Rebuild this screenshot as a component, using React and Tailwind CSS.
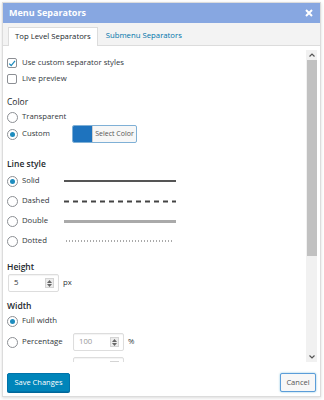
import { useState } from "react"

function Checkbox({ checked }) {
  return (
    <span className="flex h-[10px] w-[10px] shrink-0 items-center justify-center rounded-[2px] border border-[#8c8f94] bg-white">
      {checked && (
        <svg width="9" height="9" viewBox="0 0 10 10">
          <path d="M1.5 5.2 L4 7.6 L8.8 1.8" fill="none" stroke="#1e8cbe" strokeWidth="1.6" />
        </svg>
      )}
    </span>
  )
}

function Radio({ checked }) {
  return (
    <span className="flex h-[11px] w-[11px] shrink-0 items-center justify-center rounded-full border border-[#8c8f94] bg-white">
      {checked && <span className="h-[5px] w-[5px] rounded-full bg-[#1e8cbe]"></span>}
    </span>
  )
}

function Spinner() {
  return (
    <span className="flex h-[10px] w-[9px] flex-col items-center justify-center gap-[1px] border border-[#d4d4d4] bg-[#ececec]">
      <svg width="5" height="3" viewBox="0 0 5 3">
        <path d="M0 3 L2.5 0 L5 3 Z" fill="#666" />
      </svg>
      <svg width="5" height="3" viewBox="0 0 5 3">
        <path d="M0 0 L2.5 3 L5 0 Z" fill="#666" />
      </svg>
    </span>
  )
}

function NumberInput({ value, muted }) {
  return (
    <div className="flex h-[18px] w-[51px] items-center justify-between rounded-[2px] border border-[#ddd] bg-white pl-[5px] pr-[4px] shadow-[inset_0_1px_1px_rgba(0,0,0,0.05)]">
      <span className={muted ? "text-[#999]" : "text-[#32373c]"}>{value}</span>
      <Spinner />
    </div>
  )
}

function LineSample({ type }) {
  if (type === "solid") return <div className="h-[2px] w-[112px] bg-[#555]"></div>
  if (type === "double") return <div className="h-[3px] w-[112px] bg-[#aaa]"></div>
  if (type === "dashed")
    return (
      <svg width="112" height="3">
        <line x1="0" y1="1.5" x2="112" y2="1.5" stroke="#444" strokeWidth="2" strokeDasharray="5 4" />
      </svg>
    )
  return (
    <svg width="112" height="2">
      <line x1="2" y1="1" x2="110" y2="1" stroke="#555" strokeWidth="1" strokeDasharray="1 2" />
    </svg>
  )
}

export default function App() {
  const [tab] = useState("top")
  const lineStyles = [
    { id: "solid", label: "Solid", checked: true },
    { id: "dashed", label: "Dashed" },
    { id: "double", label: "Double" },
    { id: "dotted", label: "Dotted" },
  ]

  return (
    <div className="h-[400px] w-[324px] bg-white pl-[2px] pt-[2px] text-[7.75px] text-[#32373c] font-['Open_Sans',sans-serif]">
      <div className="flex h-[395px] w-[319px] flex-col border border-[#dcdcdc] bg-white shadow-[0_1px_3px_rgba(0,0,0,0.15)]">
        {/* Title bar */}
        <div className="flex h-[20px] shrink-0 items-center justify-between bg-[#87a7e1] pl-[6px] pr-[7px]">
          <span className="text-[9px] font-bold text-white">Menu Separators</span>
          <svg width="8" height="8" viewBox="0 0 8 8">
            <path d="M1 1 L7 7 M7 1 L1 7" stroke="white" strokeWidth="2" />
          </svg>
        </div>

        {/* Tabs */}
        <div className="flex h-[23px] shrink-0 items-end border-b border-[#dcdcdc] bg-[#f3f3f3] pl-[5px]">
          <div className="-mb-px flex h-[19px] items-center border border-b-0 border-[#dcdcdc] bg-white px-[6px] text-[#23282d]">
            {tab === "top" && "Top Level Separators"}
          </div>
          <div className="flex h-[18px] items-center px-[8px] text-[#0073aa]">Submenu Separators</div>
        </div>

        {/* Body */}
        <div className="flex h-[316px] shrink-0 pt-[4px]">
          <div className="flex-1 overflow-hidden pl-[4px] pt-[5px]">
            <div className="flex h-[16px] items-center gap-[5px]">
              <Checkbox checked />
              <span>Use custom separator styles</span>
            </div>
            <div className="flex h-[16px] items-center gap-[5px]">
              <Checkbox />
              <span>Live preview</span>
            </div>

            <div className="mt-[8px] flex h-[14px] items-center text-[8.5px] text-[#23282d]">Color</div>
            <div className="flex h-[16px] items-center gap-[4px]">
              <Radio />
              <span>Transparent</span>
            </div>
            <div className="flex h-[18px] items-center">
              <div className="flex w-[65px] items-center gap-[4px]">
                <Radio checked />
                <span>Custom</span>
              </div>
              <div className="flex h-[18px] w-[65px] overflow-hidden rounded-[2px] border border-[#7fb0d6] bg-[#f7f7f7]">
                <span className="w-[19px] shrink-0 bg-[#1e73be]"></span>
                <span className="flex flex-1 items-center justify-center whitespace-nowrap border-l border-[#ccc] text-[7px] text-[#555]">Select Color</span>
              </div>
            </div>

            <div className="mt-[14px] flex h-[14px] items-center text-[8.5px] font-semibold text-[#23282d]">Line style</div>
            {lineStyles.map((s) => (
              <div key={s.id} className="flex h-[20px] items-center">
                <div className="flex w-[57px] items-center gap-[4px]">
                  <Radio checked={s.checked} />
                  <span>{s.label}</span>
                </div>
                <LineSample type={s.id} />
              </div>
            ))}

            <div className="mt-[9px] flex h-[14px] items-center text-[8.5px] font-semibold text-[#23282d]">Height</div>
            <div className="flex items-center gap-[4px] pl-[1px]">
              <NumberInput value="5" />
              <span>px</span>
            </div>

            <div className="mt-[7px] flex h-[14px] items-center text-[8.5px] font-semibold text-[#23282d]">Width</div>
            <div className="flex h-[16px] items-center gap-[4px]">
              <Radio checked />
              <span>Full width</span>
            </div>
            <div className="mt-[4px] flex items-center">
              <div className="flex w-[66px] items-center gap-[4px]">
                <Radio />
                <span>Percentage</span>
              </div>
              <NumberInput value="100" muted />
              <span className="ml-[4px]">%</span>
            </div>
            <div className="mt-[6px] flex items-center pl-[66px]">
              <NumberInput value="" muted />
            </div>
          </div>

          {/* Scrollbar */}
          <div className="mr-[3px] flex w-[11px] flex-col items-center bg-[#f1f1f1]">
            <div className="flex h-[10px] items-center justify-center">
              <svg width="6" height="4" viewBox="0 0 6 4">
                <path d="M0.5 3.5 L3 1 L5.5 3.5" fill="none" stroke="#555" strokeWidth="1.2" />
              </svg>
            </div>
            <div className="h-[196px] w-[10px] bg-[#c1c1c1]"></div>
            <div className="flex-1"></div>
            <div className="flex h-[10px] items-center justify-center">
              <svg width="6" height="4" viewBox="0 0 6 4">
                <path d="M0.5 0.5 L3 3 L5.5 0.5" fill="none" stroke="#555" strokeWidth="1.2" />
              </svg>
            </div>
          </div>
        </div>

        {/* Footer */}
        <div className="flex flex-1 items-start justify-between pl-[4px] pr-[4px] pt-[11px]">
          <button className="flex h-[19px] w-[63px] items-center justify-center rounded-[2px] border border-[#0073aa] bg-[#0085ba] text-[7.5px] text-white shadow-[0_1px_0_#006799]">
            Save Changes
          </button>
          <button className="flex h-[19px] w-[36px] items-center justify-center rounded-[2px] border border-[#5b9dd9] bg-[#f7f7f7] text-[7.5px] text-[#555] shadow-[0_0_2px_rgba(30,140,190,0.6)]">
            Cancel
          </button>
        </div>
      </div>
    </div>
  )
}
